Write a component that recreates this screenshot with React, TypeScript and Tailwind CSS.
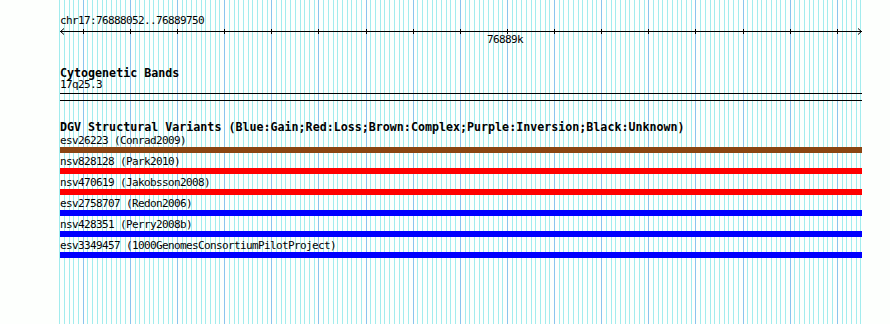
import React from 'react';

const START = 76888050;
const PX_PER_10BP = 4.713;
const ORIGIN = 59.2;

const gridLines = Array.from({ length: 171 }, (_, k) => ({
  x: Math.round(ORIGIN + k * PX_PER_10BP),
  major: (START + k * 10) % 100 === 0,
}));

const features = [
  { name: 'esv26223 (Conrad2009)', color: 'bg-[#8b4513]' },
  { name: 'nsv828128 (Park2010)', color: 'bg-[#ff0000]' },
  { name: 'nsv470619 (Jakobsson2008)', color: 'bg-[#ff0000]' },
  { name: 'esv2758707 (Redon2006)', color: 'bg-[#0000ff]' },
  { name: 'nsv428351 (Perry2008b)', color: 'bg-[#0000ff]' },
  { name: 'esv3349457 (1000GenomesConsortiumPilotProject)', color: 'bg-[#0000ff]' },
];

const small = 'h-[10px] text-[11px] leading-[10px] tracking-[-0.62px] whitespace-pre';
const bold = 'h-[9px] text-[11.67px] leading-[9px] font-bold whitespace-pre';

const App: React.FC = () => {
  const ticks = gridLines.filter((l) => l.major);

  return (
    <div className="relative w-[890px] h-[324px] overflow-hidden bg-[#fdfffd] text-black font-['DejaVu_Sans_Mono','Liberation_Mono',monospace]">
      {/* background grid */}
      <svg className="absolute inset-0" width="890" height="324" shapeRendering="crispEdges">
        {gridLines.map((l, i) => (
          <line
            key={i}
            x1={l.x + 0.5}
            x2={l.x + 0.5}
            y1={0}
            y2={324}
            stroke={l.major ? '#8ac4ee' : '#a2ecee'}
            strokeWidth={1}
          />
        ))}
      </svg>

      <div className="relative pl-[60px] pt-[16px] w-[863px]">
        <div className={small}>chr17:76888052..76889750</div>

        {/* ruler */}
        <div className="relative mt-[2px] h-[17px]">
          <svg width="803" height="7" shapeRendering="crispEdges" className="block">
            <line x1={0} x2={802} y1={3.5} y2={3.5} stroke="#000" />
            {ticks.map((t, i) => (
              <line key={i} x1={t.x - 60 + 0.5} x2={t.x - 60 + 0.5} y1={1} y2={6} stroke="#000" />
            ))}
            <polyline points="4,0.5 0.5,3.5 4,6.5" fill="none" stroke="#000" shapeRendering="auto" />
            <polyline points="798,0.5 801.5,3.5 798,6.5" fill="none" stroke="#000" shapeRendering="auto" />
          </svg>
          <div className={`absolute left-[427px] top-[7px] ${small}`}>76889k</div>
        </div>

        <div className={`mt-[24px] ${bold}`}>Cytogenetic Bands</div>
        <div className={`mt-[2px] ${small}`}>17q25.3</div>
        <div className="mt-[3px] h-px w-[802px] bg-black" />
        <div className="mt-[6px] h-px w-[802px] bg-black" />

        <div className={`mt-[22px] ${bold}`}>
          DGV Structural Variants (Blue:Gain;Red:Loss;Brown:Complex;Purple:Inversion;Black:Unknown)
        </div>

        {features.map((f) => (
          <div key={f.name}>
            <div className={`mt-[4px] ${small}`}>{f.name}</div>
            <div className={`mt-[1px] h-[6px] w-[802px] ${f.color}`} />
          </div>
        ))}
      </div>
    </div>
  );
};

export default App;
